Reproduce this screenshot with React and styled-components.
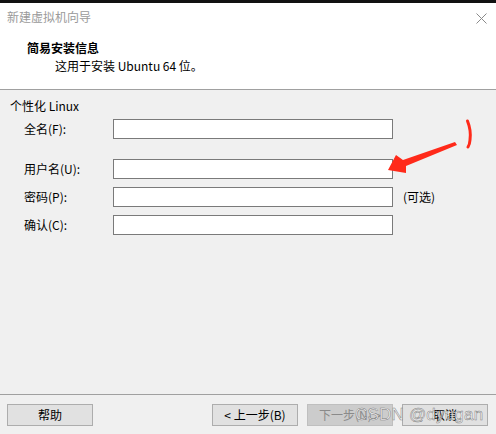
import React from 'react';
import styled, { createGlobalStyle } from 'styled-components';

const GlobalStyle = createGlobalStyle`
  html, body {
    margin: 0;
    padding: 0;
    background: #f0f0f0;
  }
  * {
    box-sizing: border-box;
  }
`;

const fields = [
  { label: '全名(F):', spaced: true },
  { label: '用户名(U):' },
  { label: '密码(P):', note: '(可选)' },
  { label: '确认(C):' }
];

const App = () => {
  return (
    <>
      <GlobalStyle />
      <Window>
        <TopStrip />
        <TitleBar>
          <WindowTitle>新建虚拟机向导</WindowTitle>
          <CloseButton aria-label="close">
            <svg width="11" height="11" viewBox="0 0 11 11">
              <path d="M0.5 0.5 L10.5 10.5 M10.5 0.5 L0.5 10.5" stroke="#8a8a8a" strokeWidth="1" fill="none" />
            </svg>
          </CloseButton>
        </TitleBar>

        <Header>
          <HeaderTitle>简易安装信息</HeaderTitle>
          <HeaderText>这用于安装 Ubuntu 64 位。</HeaderText>
        </Header>
        <Divider />

        <Body>
          <GroupTitle>个性化 Linux</GroupTitle>
          <Form>
            {fields.map((f) => (
              <FieldRow key={f.label} $spaced={f.spaced}>
                <Label>{f.label}</Label>
                <TextInput type={f.label.startsWith('密码') || f.label.startsWith('确认') ? 'password' : 'text'} />
                <Note>{f.note}</Note>
              </FieldRow>
            ))}
          </Form>
        </Body>

        <Divider />
        <Footer>
          <Button>帮助</Button>
          <ButtonGroup>
            <Button>&lt; 上一步(B)</Button>
            <Button disabled>下一步(N) &gt;</Button>
            <Button>取消</Button>
          </ButtonGroup>
        </Footer>

        <Annotation width="496" height="434" viewBox="0 0 496 434">
          <path
            d="M467.5 121 C469.5 126 471 133 470 140 C469.8 143 469 145.5 468 147"
            stroke="#ff2a1a"
            strokeWidth="3"
            strokeLinecap="round"
            fill="none"
          />
          <polygon
            points="388,170 396,155 403,160 455,142 457,145 406,166 406,173"
            fill="#ff2a1a"
          />
        </Annotation>
        <Watermark>CSDN @dyugan</Watermark>
      </Window>
    </>
  );
};

const Window = styled.div`
  position: relative;
  width: 496px;
  height: 434px;
  display: flex;
  flex-direction: column;
  background: #f0f0f0;
  font-family: "Noto Sans CJK SC", "Open Sans", sans-serif;
  font-size: 12px;
  color: #000;
  overflow: hidden;
`;

const TopStrip = styled.div`
  height: 3px;
  background: #111;
`;

const TitleBar = styled.div`
  height: 29px;
  background: #fff;
  display: flex;
  align-items: center;
  justify-content: space-between;
  padding: 0 9px 0 7px;
`;

const WindowTitle = styled.span`
  color: #9a9a9a;
  font-size: 12px;
  line-height: 16px;
  margin-top: -1px;
`;

const CloseButton = styled.span`
  display: flex;
  width: 11px;
  height: 11px;
  margin-top: 1px;
`;

const Header = styled.div`
  height: 57px;
  background: #fff;
  padding: 8px 0 0 27px;
  display: flex;
  flex-direction: column;
  gap: 2px;
`;

const HeaderTitle = styled.div`
  font-weight: bold;
  line-height: 16px;
`;

const HeaderText = styled.div`
  line-height: 16px;
  padding-left: 28px;
`;

const Divider = styled.div`
  height: 1px;
  background: #a0a0a0;
`;

const Body = styled.div`
  flex: 1;
  padding: 8px 0 0 10px;
`;

const GroupTitle = styled.div`
  line-height: 16px;
`;

const Form = styled.div`
  margin-top: 5px;
  padding-left: 14px;
  display: flex;
  flex-direction: column;
  gap: 8px;
`;

const FieldRow = styled.div`
  display: grid;
  grid-template-columns: 79px 280px auto;
  column-gap: 10px;
  align-items: center;
  height: 20px;
  margin-bottom: ${(p) => (p.$spaced ? '12px' : '0')};
`;

const Label = styled.span`
  line-height: 16px;
`;

const TextInput = styled.input`
  width: 280px;
  height: 20px;
  margin: 0;
  border: 1px solid #7a7a7a;
  background: #fff;
  outline: none;
  font: inherit;
  padding: 0 3px;
`;

const Note = styled.span`
  line-height: 16px;
`;

const Footer = styled.div`
  height: 39px;
  display: flex;
  align-items: flex-start;
  justify-content: space-between;
  padding: 9px 8px 0 7px;
`;

const ButtonGroup = styled.div`
  display: flex;
  gap: 9px;
`;

const Button = styled.button`
  width: 86px;
  height: 22px;
  margin: 0;
  padding: 0;
  border: 1px solid #adadad;
  background: #e1e1e1;
  font-family: inherit;
  font-size: 12px;
  line-height: 16px;
  color: #000;

  &:disabled {
    background: #cccccc;
    border-color: #bfbfbf;
    color: #8a8a8a;
  }
`;

const Annotation = styled.svg`
  position: absolute;
  left: 0;
  top: 0;
  pointer-events: none;
`;

const Watermark = styled.span`
  position: absolute;
  left: 355px;
  top: 404px;
  font-family: "Liberation Sans", Arial, sans-serif;
  font-size: 17px;
  line-height: 22px;
  letter-spacing: 0.2px;
  color: rgba(255, 255, 255, 0.75);
  -webkit-text-stroke: 0.5px rgba(95, 95, 95, 0.8);
  pointer-events: none;
  white-space: nowrap;
`;

export default App;
